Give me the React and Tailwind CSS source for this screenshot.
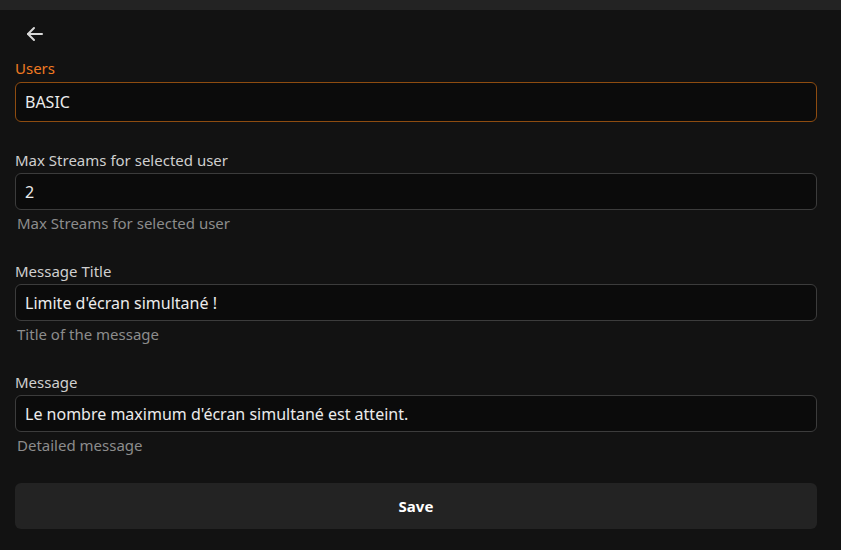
import React from "react";

function Field({ label, value, helper, className = "" }) {
  return (
    <div className={"flex flex-col " + className}>
      <label className="text-[15px] leading-5 text-[#cfcfcf]">{label}</label>
      <div className="mt-[3px] h-[37px] flex items-center rounded-md border border-[#3c3c3c] bg-[#0b0b0b] px-[9px] text-base text-[#ececec]">
        {value}
      </div>
      <div className="mt-[3px] pl-[2px] text-[15px] leading-5 text-[#8c8c8c]">{helper}</div>
    </div>
  );
}

export default function App() {
  return (
    <div
      className="w-[841px] h-[550px] bg-[#121212] overflow-hidden"
      style={{ fontFamily: '"Noto Sans", "Open Sans", sans-serif' }}
    >
      <div className="h-[10px] bg-[#232323]" />
      <div className="pl-[15px] pr-[24px]">
        <div className="h-[48px] flex items-center pl-[8px]">
          <svg width="24" height="24" viewBox="0 0 24 24" fill="none" stroke="#d8d8d8" strokeWidth="2" strokeLinecap="round" strokeLinejoin="round">
            <path d="M19 12H5" />
            <path d="M11 18l-6-6 6-6" />
          </svg>
        </div>
        <div className="flex flex-col">
          <label className="text-[15px] leading-5 text-[#f07a22]">Users</label>
          <div className="mt-[4px] h-[40px] flex items-center rounded-md border border-[#8e4c10] bg-[#0b0b0b] px-[9px] text-base text-[#ececec]">
            BASIC
          </div>
        </div>
        <div className="mt-[28px] flex flex-col gap-[28px]">
          <Field label="Max Streams for selected user" value="2" helper="Max Streams for selected user" />
          <Field label="Message Title" value="Limite d'écran simultané !" helper="Title of the message" />
          <Field label="Message" value="Le nombre maximum d'écran simultané est atteint." helper="Detailed message" />
        </div>
        <button className="mt-[28px] w-full h-[46px] rounded-md bg-[#232323] text-[15px] font-bold text-white">
          Save
        </button>
      </div>
    </div>
  );
}
